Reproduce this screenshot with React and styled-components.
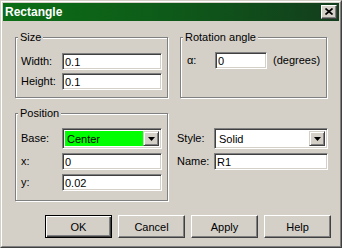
import React from 'react';
import styled, { createGlobalStyle } from 'styled-components';

const Global = createGlobalStyle`
  html, body { margin: 0; padding: 0; background: #d4d0c8; }
  body { font-family: "Liberation Sans", Arial, sans-serif; font-size: 11px; color: #000; }
  * { box-sizing: border-box; }
`;

const Window = styled.div`
  width: 342px;
  height: 248px;
  border: 1px solid;
  border-color: #d4d0c8 #404040 #404040 #d4d0c8;
  background: #d4d0c8;
`;

const Frame = styled.div`
  height: 100%;
  border: 1px solid;
  border-color: #fff #808080 #808080 #fff;
  padding: 1px;
  display: flex;
  flex-direction: column;
`;

const TitleBar = styled.div`
  height: 18px;
  flex: none;
  display: flex;
  align-items: center;
  justify-content: space-between;
  padding: 0 2px 0 2px;
  background: linear-gradient(to right, #0b6e15 0%, #0e5a19 50%, #133d1d 100%);
  color: #fff;
  font-weight: bold;
  font-size: 12px;
`;

const CloseButton = styled.div`
  width: 16px;
  height: 14px;
  background: #d4d0c8;
  border: 1px solid;
  border-color: #fff #404040 #404040 #fff;
  box-shadow: inset -1px -1px 0 #808080;
  display: flex;
  align-items: center;
  justify-content: center;
  padding-bottom: 1px;
  padding-right: 1px;
`;

const Content = styled.div`
  flex: 1;
  display: flex;
  flex-direction: column;
  padding: 16px 0 0 12px;
`;

const Row = styled.div`
  display: flex;
  align-items: flex-start;
  margin-top: ${p => p.$mt || 0}px;
`;

const Group = styled.div`
  position: relative;
  width: ${p => p.$w}px;
  height: ${p => p.$h}px;
  margin-left: ${p => p.$ml || 0}px;
  border: 1px solid #808080;
  box-shadow: inset 1px 1px 0 #fff, 1px 1px 0 #fff;
  padding: ${p => p.$pt}px 0 0 ${p => p.$pl}px;
  display: flex;
  flex-direction: column;
  gap: ${p => p.$gap || 3}px;
`;

const Caption = styled.span`
  position: absolute;
  top: -7px;
  left: 2px;
  padding: 0 2px;
  line-height: 13px;
  background: #d4d0c8;
`;

const Field = styled.div`
  display: grid;
  grid-template-columns: ${p => p.$label}px ${p => p.$input}px auto;
  align-items: center;
  column-gap: 6px;
`;

const FieldNoGap = styled(Field)`
  column-gap: 0;
`;

const Label = styled.span`
  line-height: 13px;
  white-space: nowrap;
`;

const Input = styled.input`
  width: 100%;
  height: ${p => p.$h || 17}px;
  margin: 0;
  padding: 0 2px;
  border: 1px solid;
  border-color: #808080 #fff #fff #808080;
  box-shadow: inset 1px 1px 0 #404040, inset -1px -1px 0 #d4d0c8;
  background: #fff;
  font-family: "Liberation Sans", Arial, sans-serif;
  font-size: 11px;
  color: #000;
  outline: none;
  border-radius: 0;
`;

const Select = styled.div`
  width: 100%;
  height: 21px;
  border: 1px solid;
  border-color: #808080 #fff #fff #808080;
  box-shadow: inset 1px 1px 0 #404040, inset -1px -1px 0 #d4d0c8;
  padding: 2px;
  display: flex;
  background: #fff;
`;

const SelectValue = styled.div`
  flex: 1;
  display: flex;
  align-items: center;
  padding-left: 2px;
  background: ${p => p.$bg || '#fff'};
`;

const DropButton = styled.div`
  width: 16px;
  height: 100%;
  background: #d4d0c8;
  border: 1px solid;
  border-color: #d4d0c8 #404040 #404040 #d4d0c8;
  box-shadow: inset 1px 1px 0 #fff, inset -1px -1px 0 #808080;
  display: flex;
  align-items: center;
  justify-content: center;
`;

const Side = styled.div`
  margin-left: 9px;
  padding-top: 15px;
  display: flex;
  flex-direction: column;
  gap: 4px;
`;

const ButtonBar = styled.div`
  display: flex;
  gap: 6px;
  padding-left: 30px;
  margin-top: 14px;
`;

const Button = styled.div`
  width: 67px;
  height: 23px;
  display: flex;
  align-items: center;
  justify-content: center;
  background: #d4d0c8;
  border: 1px solid;
  border-color: ${p => (p.$default ? '#000' : '#fff #404040 #404040 #fff')};
  box-shadow: ${p =>
    p.$default
      ? 'inset 1px 1px 0 #fff, inset -1px -1px 0 #404040, inset -2px -2px 0 #808080'
      : 'inset -1px -1px 0 #808080'};
`;

const Arrow = () => (
  <svg width="7" height="4" viewBox="0 0 7 4">
    <polygon points="0,0 7,0 3.5,4" fill="#000" />
  </svg>
);

const CloseIcon = () => (
  <svg width="8" height="7" viewBox="0 0 8 7">
    <path d="M0.5 0.5 L7.5 6.5 M7.5 0.5 L0.5 6.5" stroke="#000" strokeWidth="1.7" />
  </svg>
);

const Dropdown = ({ value, bg }) => (
  <Select>
    <SelectValue $bg={bg}>{value}</SelectValue>
    <DropButton>
      <Arrow />
    </DropButton>
  </Select>
);

export default function App() {
  return (
    <>
      <Global />
      <Window>
        <Frame>
          <TitleBar>
            <span>Rectangle</span>
            <CloseButton>
              <CloseIcon />
            </CloseButton>
          </TitleBar>
          <Content>
            <Row>
              <Group $w={153} $h={61} $pt={15} $pl={5}>
                <Caption>Size</Caption>
                <FieldNoGap $label={41} $input={100}>
                  <Label>Width:</Label>
                  <Input defaultValue="0.1" readOnly />
                </FieldNoGap>
                <FieldNoGap $label={41} $input={100}>
                  <Label>Height:</Label>
                  <Input defaultValue="0.1" readOnly />
                </FieldNoGap>
              </Group>
              <Group $w={147} $h={61} $ml={12} $pt={14} $pl={6}>
                <Caption>Rotation angle</Caption>
                <Field $label={22} $input={52}>
                  <Label>α:</Label>
                  <Input defaultValue="0" readOnly />
                  <Label>(degrees)</Label>
                </Field>
              </Group>
            </Row>
            <Row $mt={15}>
              <Group $w={153} $h={88} $pt={14} $pl={5} $gap={4}>
                <Caption>Position</Caption>
                <FieldNoGap $label={41} $input={100}>
                  <Label>Base:</Label>
                  <Dropdown value="Center" bg="#00ff00" />
                </FieldNoGap>
                <FieldNoGap $label={41} $input={100}>
                  <Label>x:</Label>
                  <Input defaultValue="0" readOnly />
                </FieldNoGap>
                <FieldNoGap $label={41} $input={100}>
                  <Label>y:</Label>
                  <Input defaultValue="0.02" readOnly />
                </FieldNoGap>
              </Group>
              <Side>
                <FieldNoGap $label={37} $input={114}>
                  <Label>Style:</Label>
                  <Dropdown value="Solid" />
                </FieldNoGap>
                <FieldNoGap $label={37} $input={114}>
                  <Label>Name:</Label>
                  <Input defaultValue="R1" readOnly />
                </FieldNoGap>
              </Side>
            </Row>
            <ButtonBar>
              <Button $default>OK</Button>
              <Button>Cancel</Button>
              <Button>Apply</Button>
              <Button>Help</Button>
            </ButtonBar>
          </Content>
        </Frame>
      </Window>
    </>
  );
}
